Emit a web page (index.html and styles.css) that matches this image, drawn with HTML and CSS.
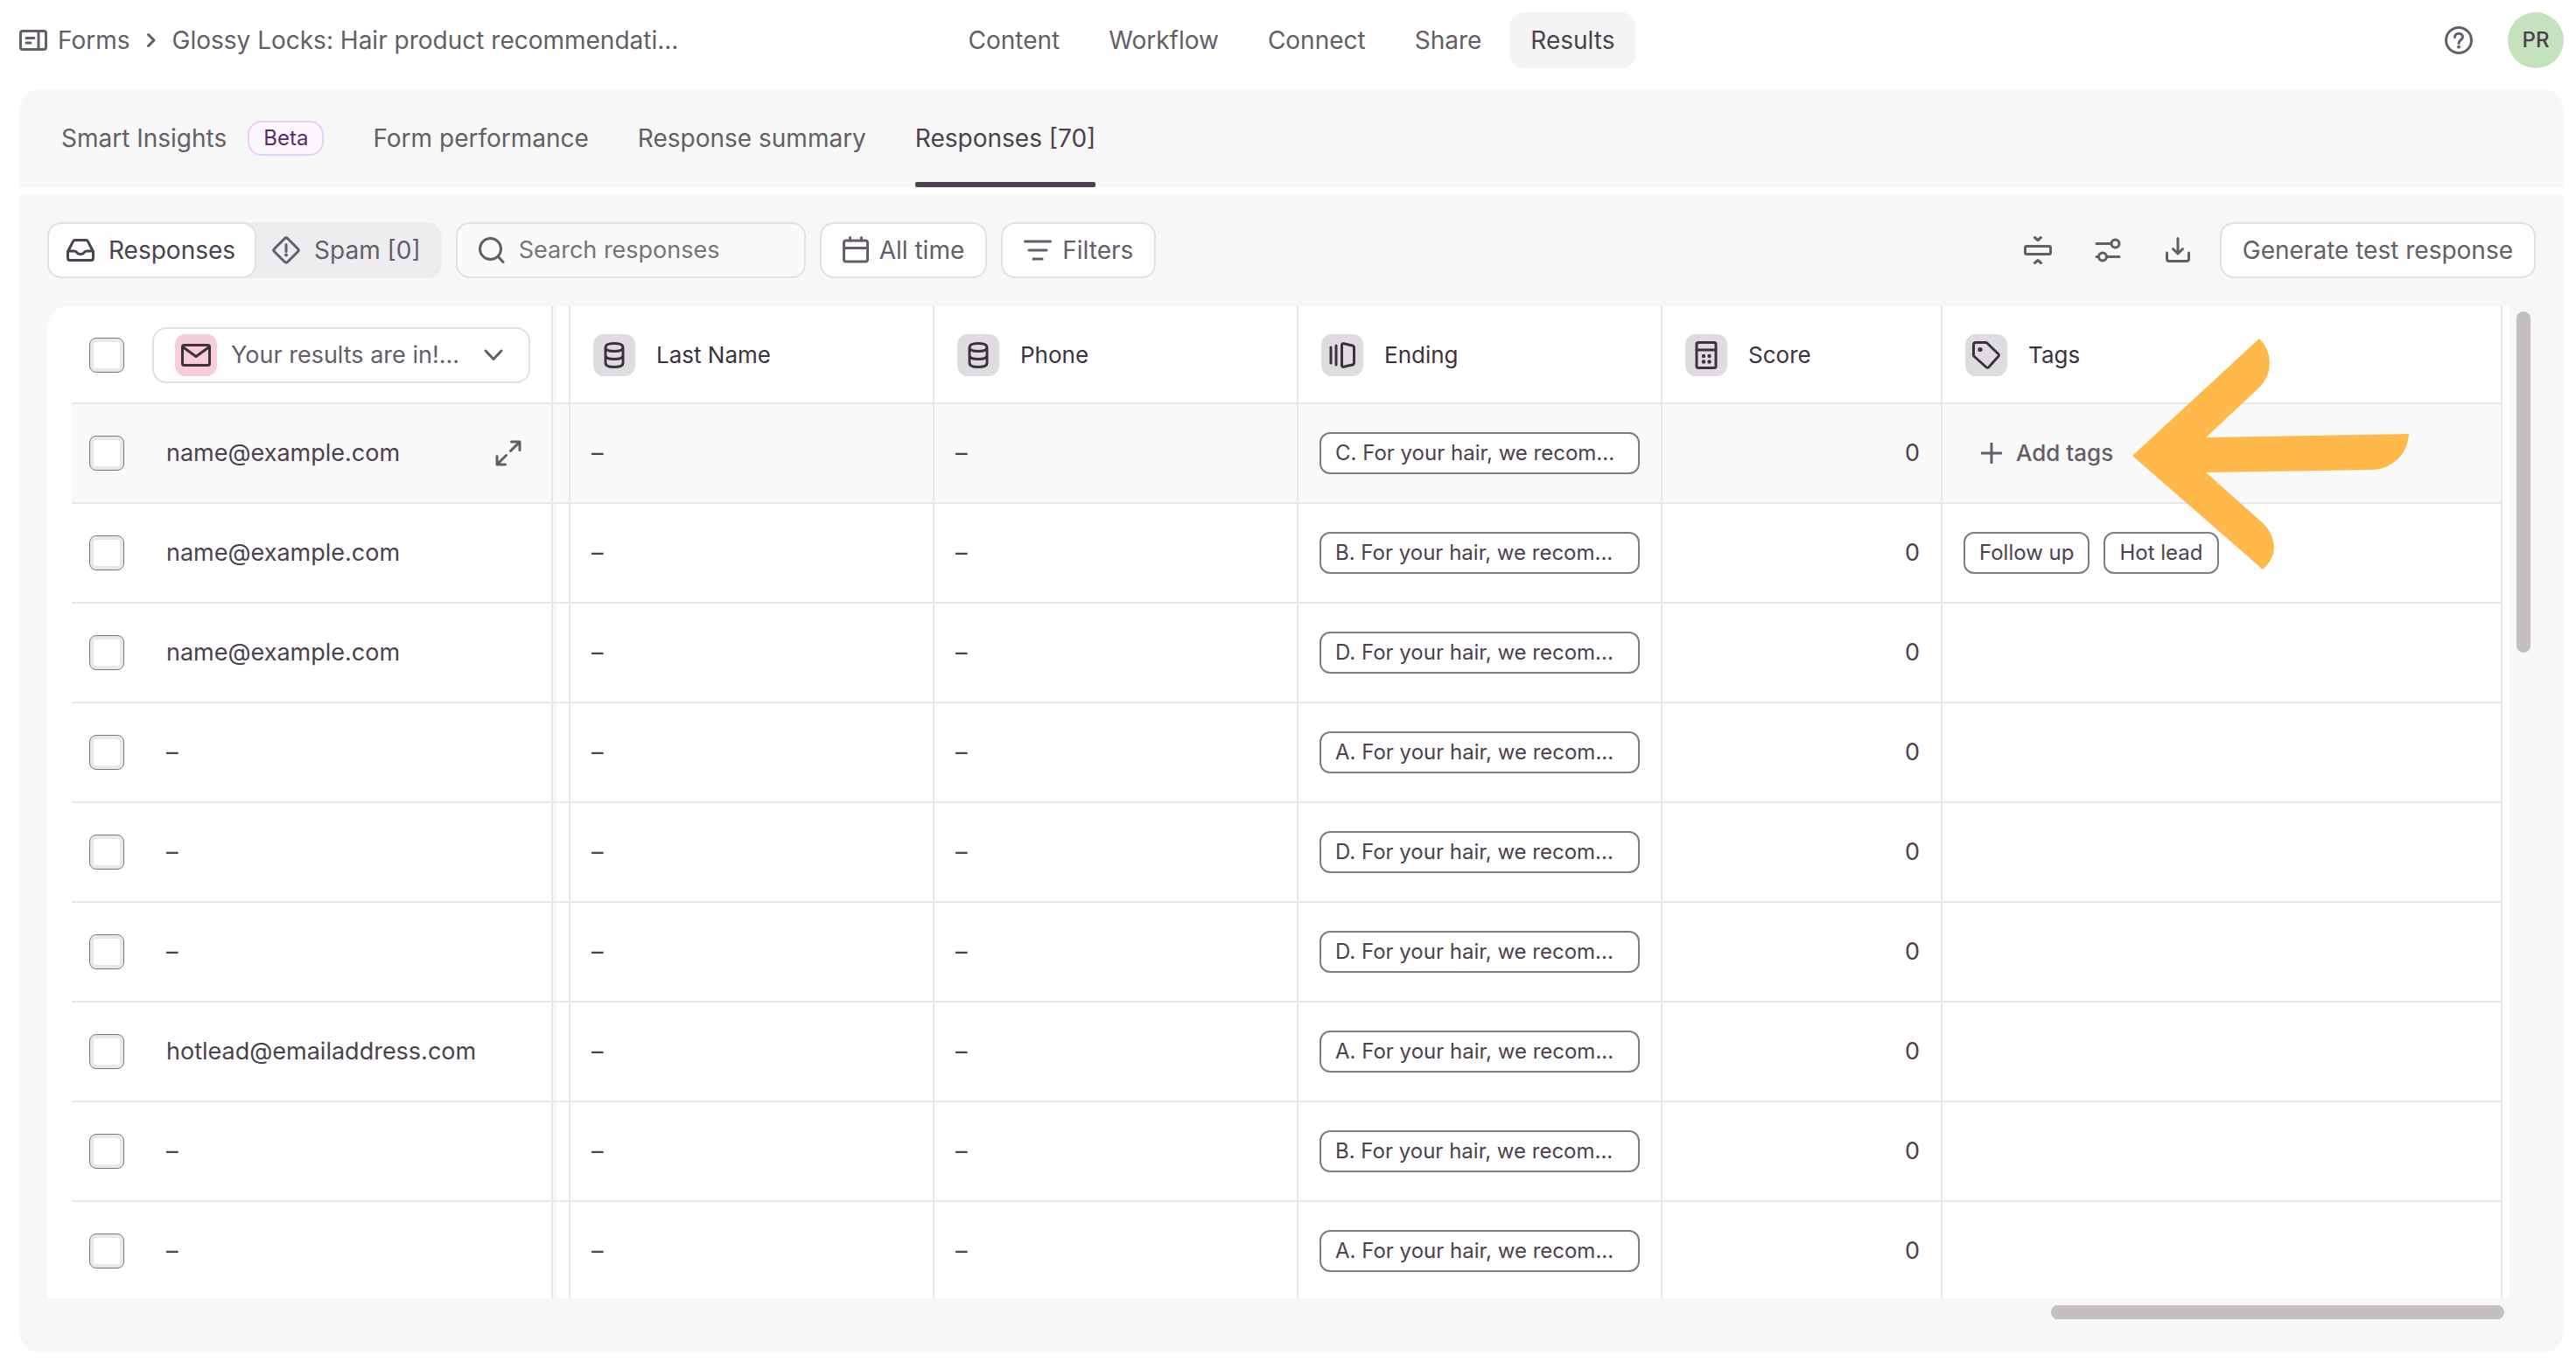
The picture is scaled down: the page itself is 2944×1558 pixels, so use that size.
FILE: index.html
```html
<!DOCTYPE html>
<html lang="en">
<head>
<meta charset="utf-8">
<meta name="viewport" content="width=device-width, initial-scale=1">
<title>Glossy Locks: Hair product recommendation – Results</title>
<link rel="stylesheet" href="styles.css">
</head>
<body>
<svg class="sprite" aria-hidden="true">
  <symbol id="i-db" viewBox="0 0 24 32"><path d="M2 7c0-2.800 4-4.500 10-4.500S22 4.200 22 7s-4 4.500-10 4.500S2 9.800 2 7zM2 7v18c0 2.800 4 4.500 10 4.500s10-1.700 10-4.500V7M2 16c0 2.800 4 4.500 10 4.500s10-1.700 10-4.500"/></symbol>
  <symbol id="i-down" viewBox="0 0 24 16"><path d="M3 3l9 9.500L21 3"/></symbol>
</svg>

<header class="topbar">
  <nav class="crumbs" aria-label="Breadcrumb">
    <a class="crumb" href="#">
      <svg class="icon" width="32" height="24" viewBox="0 0 32 24" aria-hidden="true"><rect x="1.500" y="1.500" width="29" height="21" rx="2.500"/><path d="M22 2v20M8 9.500h9M8 15h5"/></svg>
      Forms
    </a>
    <svg class="icon" width="12" height="18" viewBox="0 0 12 18" aria-hidden="true"><path d="M2.500 2.500L9 9l-6.500 6.500"/></svg>
    <a class="crumb" href="#">Glossy Locks: Hair product recommendati...</a>
  </nav>
  <nav class="mainnav" aria-label="Form">
    <a class="navlink" href="#">Content</a>
    <a class="navlink" href="#">Workflow</a>
    <a class="navlink" href="#">Connect</a>
    <a class="navlink" href="#">Share</a>
    <a class="navlink navlink-on" href="#" aria-current="page">Results</a>
  </nav>
  <div class="account">
    <button class="plain" type="button" aria-label="Help">
      <svg class="icon" width="32" height="32" viewBox="0 0 32 32" aria-hidden="true"><circle cx="16" cy="16" r="14.500"/><path d="M11.500 12.500c0-2.600 2-4.300 4.500-4.300s4.500 1.700 4.500 4.100c0 3.200-4.500 3.600-4.500 7.200"/><circle class="dot" cx="16" cy="23.700" r="1.900"/></svg>
    </button>
    <button class="avatar" type="button">PR</button>
  </div>
</header>

<main class="main">
  <nav class="tabs" aria-label="Results">
    <a class="tab" href="#">Smart Insights <span class="beta">Beta</span></a>
    <a class="tab" href="#">Form performance</a>
    <a class="tab" href="#">Response summary</a>
    <a class="tab tab-on" href="#" aria-current="page">Responses [70]</a>
  </nav>

  <section class="panel">
    <div class="toolbar">
      <div class="segment">
        <button class="seg seg-on" type="button">
          <svg class="icon" width="32" height="32" viewBox="0 0 32 32" aria-hidden="true"><path d="M1.500 17.500L7.500 6q.700-1.500 2.500-1.500h12q1.800 0 2.500 1.500l6 11.500V25q0 2.500-2.500 2.500H4Q1.500 27.500 1.500 25zM1.500 17H9q2 0 3 1.800 1.200 1.700 4 1.700t4-1.700Q21 17 23 17h7.500"/></svg>
          Responses
        </button>
        <button class="seg" type="button">
          <svg class="icon" width="32" height="32" viewBox="0 0 32 32" aria-hidden="true"><path d="M14.200 2.700q1.800-1.800 3.600 0l11.500 11.500q1.800 1.800 0 3.600L17.800 29.300q-1.800 1.800-3.600 0L2.700 17.800q-1.800-1.800 0-3.600zM16 9.500v8"/><circle class="dot" cx="16" cy="21.500" r="1.900"/></svg>
          Spam [0]
        </button>
      </div>
      <label class="search">
        <svg class="icon" width="30" height="30" viewBox="0 0 30 30" aria-hidden="true"><circle cx="13.500" cy="13.500" r="12"/><path d="M22 22l6 6.500"/></svg>
        <input class="search-box" type="text" placeholder="Search responses" aria-label="Search responses">
      </label>
      <button class="btn" type="button">
        <svg class="icon" width="30" height="32" viewBox="0 0 30 32" aria-hidden="true"><rect x="1.500" y="5" width="27" height="24" rx="2.500"/><path d="M2 13.500h26M8.500 1.500V5M21.500 1.500V5"/></svg>
        All time
      </button>
      <button class="btn" type="button">
        <svg class="icon" width="32" height="24" viewBox="0 0 32 24" aria-hidden="true"><path d="M1.500 2h29M6 12h20M11 22h10"/></svg>
        Filters
      </button>
      <div class="tools">
        <button class="plain" type="button" aria-label="Row height">
          <svg class="icon" width="32" height="32" viewBox="0 0 32 32" aria-hidden="true"><rect x="1.500" y="11.500" width="29" height="9" rx="1.500"/><path d="M12.500 1.500l3.500 3 3.500-3M12.500 30.500l3.500-3 3.500 3"/></svg>
        </button>
        <button class="plain" type="button" aria-label="Columns">
          <svg class="icon" width="32" height="32" viewBox="0 0 32 32" aria-hidden="true"><circle cx="24.500" cy="8.500" r="4.500"/><path d="M3 8.500h17M3 23.500h2.500M14.500 23.500H29"/><circle cx="10" cy="23.500" r="4.500"/></svg>
        </button>
        <button class="plain" type="button" aria-label="Download">
          <svg class="icon" width="32" height="32" viewBox="0 0 32 32" aria-hidden="true"><path d="M16 2.500v17M10.500 14.500l5.500 5.500 5.500-5.500M3.500 19v7q0 2.500 2.500 2.500h20q2.500 0 2.500-2.500v-7"/></svg>
        </button>
        <button class="btn btn-wide" type="button">Generate test response</button>
      </div>
    </div>

    <div class="board">
      <div class="sheet">
        <table class="grid">
          <colgroup>
            <col class="c-check"><col class="c-name"><col class="c-gap"><col class="c-mid"><col class="c-mid"><col class="c-mid"><col class="c-score"><col>
          </colgroup>
          <thead>
            <tr>
              <th class="check"><input class="box" type="checkbox" aria-label="Select all responses"></th>
              <th class="name">
                <div class="picker">
                  <span class="badge badge-pink"><svg class="icon" width="34" height="26" viewBox="0 0 34 26" aria-hidden="true"><rect x="1.500" y="1.500" width="31" height="23" rx="2"/><path d="M2.500 4L17 14.500 31.500 4"/></svg></span>
                  <select class="picker-select" aria-label="Question shown"><option>Your results are in!...</option></select>
                  <svg class="icon picker-arrow" width="24" height="16" aria-hidden="true"><use href="#i-down"/></svg>
                </div>
              </th>
              <td class="gap"></td>
              <th><div class="head"><span class="badge"><svg class="icon" width="26" height="32" aria-hidden="true"><use href="#i-db"/></svg></span>Last Name</div></th>
              <th><div class="head"><span class="badge"><svg class="icon" width="26" height="32" aria-hidden="true"><use href="#i-db"/></svg></span>Phone</div></th>
              <th><div class="head"><span class="badge"><svg class="icon" width="30" height="30" viewBox="0 0 30 30" aria-hidden="true"><path d="M2 6v18M8 4v22M14.500 3.500q0-2.200 2.200-1.800l9.800 2.300q2 .500 2 2.500v17q0 2-2 2.500l-9.800 2.300q-2.200.400-2.200-1.800z"/></svg></span>Ending</div></th>
              <th><div class="head"><span class="badge"><svg class="icon" width="26" height="32" viewBox="0 0 26 32" aria-hidden="true"><rect x="2" y="1.500" width="22" height="29" rx="2"/><path d="M2 10h22"/><g class="dot"><circle cx="10" cy="17" r="2.200"/><circle cx="16.500" cy="17" r="2.200"/><circle cx="10" cy="23.500" r="2.200"/><circle cx="16.500" cy="23.500" r="2.200"/></g></svg></span>Score</div></th>
              <th><div class="head"><span class="badge"><svg class="icon" width="32" height="32" viewBox="0 0 32 32" aria-hidden="true"><path d="M1.500 4q0-2.500 2.500-2.500h11q1.200 0 2 .800l12.700 12.200q1.600 1.500 0 3L19 29.500q-1.600 1.600-3.200 0L2.300 17.500q-.800-.800-.800-2z"/><circle class="dot" cx="9" cy="9.500" r="2.600"/></svg></span>Tags</div></th>
            </tr>
          </thead>
          <tbody>
            <tr class="hover">
              <td class="check"><input class="box" type="checkbox" aria-label="Select response 1"></td>
              <td class="name"><div class="who">name@example.com<button class="plain" type="button" aria-label="Expand"><svg class="icon" width="30" height="30" viewBox="0 0 30 30" aria-hidden="true"><path d="M18.500 2H28v9.500M27.500 2.500L17.500 12.500M11.500 28H2v-9.500M2.500 27.500l10-10"/></svg></button></div></td>
              <td class="gap"></td><td>–</td><td>–</td><td><span class="chip">C. For your hair, we recom...</span></td><td class="num">0</td>
              <td><button class="add" type="button"><svg class="icon" width="24" height="24" viewBox="0 0 24 24" aria-hidden="true"><path d="M12 1v22M1 12h22"/></svg>Add tags</button></td>
            </tr>
            <tr>
              <td class="check"><input class="box" type="checkbox" aria-label="Select response 2"></td>
              <td class="name">name@example.com</td>
              <td class="gap"></td><td>–</td><td>–</td><td><span class="chip">B. For your hair, we recom...</span></td><td class="num">0</td>
              <td><div class="tags"><span class="chip">Follow up</span><span class="chip">Hot lead</span></div></td>
            </tr>
            <tr>
              <td class="check"><input class="box" type="checkbox" aria-label="Select response 3"></td>
              <td class="name">name@example.com</td>
              <td class="gap"></td><td>–</td><td>–</td><td><span class="chip">D. For your hair, we recom...</span></td><td class="num">0</td><td></td>
            </tr>
            <tr>
              <td class="check"><input class="box" type="checkbox" aria-label="Select response 4"></td>
              <td class="name">–</td>
              <td class="gap"></td><td>–</td><td>–</td><td><span class="chip">A. For your hair, we recom...</span></td><td class="num">0</td><td></td>
            </tr>
            <tr>
              <td class="check"><input class="box" type="checkbox" aria-label="Select response 5"></td>
              <td class="name">–</td>
              <td class="gap"></td><td>–</td><td>–</td><td><span class="chip">D. For your hair, we recom...</span></td><td class="num">0</td><td></td>
            </tr>
            <tr>
              <td class="check"><input class="box" type="checkbox" aria-label="Select response 6"></td>
              <td class="name">–</td>
              <td class="gap"></td><td>–</td><td>–</td><td><span class="chip">D. For your hair, we recom...</span></td><td class="num">0</td><td></td>
            </tr>
            <tr>
              <td class="check"><input class="box" type="checkbox" aria-label="Select response 7"></td>
              <td class="name">hotlead@emailaddress.com</td>
              <td class="gap"></td><td>–</td><td>–</td><td><span class="chip">A. For your hair, we recom...</span></td><td class="num">0</td><td></td>
            </tr>
            <tr>
              <td class="check"><input class="box" type="checkbox" aria-label="Select response 8"></td>
              <td class="name">–</td>
              <td class="gap"></td><td>–</td><td>–</td><td><span class="chip">B. For your hair, we recom...</span></td><td class="num">0</td><td></td>
            </tr>
            <tr>
              <td class="check"><input class="box" type="checkbox" aria-label="Select response 9"></td>
              <td class="name">–</td>
              <td class="gap"></td><td>–</td><td>–</td><td><span class="chip">A. For your hair, we recom...</span></td><td class="num">0</td><td></td>
            </tr>
          </tbody>
        </table>
      </div>
      <div class="vbar"></div>
      <div class="hbar"></div>
      <svg class="pointer" width="320" height="268" viewBox="0 0 320 268" aria-hidden="true"><path d="M0 136L145 2Q157 14 157 30Q157 46 145 58L84 115L316 111Q315 129 303 140Q290 152 275 152L84 155L147 211Q161 223 162 241Q162 254 149 266Z"/></svg>
    </div>
  </section>
</main>
</body>
</html>
```
FILE: styles.css
```css
:root {
  --ink: #4c414e;
  --ink-strong: #3c323e;
  --ink-soft: #655d67;
  --line: #e8e8e8;
  --surface: #f7f7f7;
  --control: #fdfdfd;
  --control-line: #e1e1e1;
}

* { box-sizing: border-box; }

body {
  margin: 0;
  height: 100vh;
  display: flex;
  flex-direction: column;
  padding: 14px 14px 12px 22px;
  background: #fff;
  color: var(--ink);
  font: 28px/40px Inter, "Liberation Sans", sans-serif;
}

a { color: inherit; text-decoration: none; }
button, input, select { font: inherit; color: inherit; margin: 0; }
button { cursor: pointer; }

.sprite { display: none; }

.icon {
  flex: none;
  fill: none;
  stroke: currentColor;
  stroke-width: 3;
  stroke-linecap: round;
  stroke-linejoin: round;
}

.dot { fill: currentColor; stroke: none; }

.plain {
  display: flex;
  padding: 0;
  border: 0;
  background: none;
  color: var(--ink-soft);
}

/* Top bar */

.topbar {
  display: grid;
  grid-template-columns: 1fr auto 1fr;
  align-items: center;
  margin-bottom: 24px;
  color: var(--ink-soft);
}

.crumbs { display: flex; align-items: center; gap: 18px; }
.crumb { display: flex; align-items: center; gap: 12px; white-space: nowrap; }

.mainnav { display: flex; gap: 8px; }
.navlink { padding: 12px 24px; border-radius: 16px; }
.navlink-on { background: #f4f4f4; color: var(--ink); }

.account { display: flex; align-items: center; justify-content: flex-end; gap: 40px; }

.avatar {
  width: 64px;
  height: 64px;
  padding: 0;
  border: 0;
  border-radius: 50%;
  background: #c4e2bb;
  color: var(--ink);
  font-size: 24px;
  font-weight: 500;
}

/* Panels */

.main { flex: 1; min-height: 0; display: flex; flex-direction: column; gap: 8px; }

.tabs {
  display: flex;
  gap: 56px;
  height: 112px;
  padding: 0 48px;
  border-radius: 24px 24px 0 0;
  background: var(--surface);
  color: var(--ink-soft);
}

.tab {
  display: flex;
  align-items: center;
  gap: 24px;
  border: solid transparent;
  border-width: 6px 0;
  white-space: nowrap;
}

.tab-on { position: relative; color: var(--ink); }

.tab-on::after {
  content: "";
  position: absolute;
  inset: auto 0 -6px;
  height: 6px;
  border-radius: 2px;
  background: var(--ink);
}

.beta {
  padding: 0 16px;
  border: 2px solid #e9cdfb;
  border-radius: 16px;
  background: #fdf8ff;
  color: #5b2a6e;
  font-size: 24px;
  line-height: 36px;
}

.panel {
  flex: 1;
  min-height: 0;
  display: flex;
  flex-direction: column;
  gap: 32px;
  padding: 32px 32px 38px;
  border-radius: 0 0 24px 24px;
  background: var(--surface);
}

/* Toolbar */

.toolbar { display: flex; gap: 16px; color: var(--ink-soft); }

.segment {
  display: flex;
  padding: 2px;
  border-radius: 16px;
  background: #ededef;
}

.seg {
  display: flex;
  align-items: center;
  gap: 16px;
  height: 60px;
  padding: 0 22px 0 20px;
  border: 0;
  border-radius: 14px;
  background: none;
}

.seg-on { background: var(--control); color: var(--ink); box-shadow: 0 0 0 2px var(--control-line); }

.search, .btn {
  display: flex;
  align-items: center;
  height: 64px;
  border: 2px solid var(--control-line);
  border-radius: 16px;
  background: var(--control);
}

.search { gap: 16px; width: 400px; padding: 0 24px; background: #fafafa; }

.search-box {
  flex: 1;
  min-width: 0;
  padding: 0;
  border: 0;
  outline: 0;
  background: none;
  font-size: 27px;
}

.search-box::placeholder { color: #757575; opacity: 1; }

.btn { gap: 12px; padding: 0 24px; white-space: nowrap; }
.tools { display: flex; align-items: center; gap: 48px; margin-left: auto; }
.btn-wide { margin-left: -16px; }

/* Response table */

.board {
  position: relative;
  flex: 1;
  min-height: 0;
  display: grid;
  grid-template: minmax(0, 1fr) 16px / minmax(0, 1fr) 16px;
  gap: 8px;
  padding-right: 6px;
}

.sheet {
  overflow: hidden;
  padding: 0 8px 0 28px;
  border-radius: 24px 0 0 0;
  background: #fff;
}

.grid {
  width: 100%;
  table-layout: fixed;
  border-collapse: separate;
  border-spacing: 0;
  font-size: 27px;
}

.c-check { width: 92px; }
.c-name { width: 458px; }
.c-gap { width: 20px; }
.c-mid { width: 416px; }
.c-score { width: 320px; }

.grid th, .grid td {
  height: 114px;
  padding: 0 24px;
  border: solid var(--line);
  border-width: 0 2px 2px 0;
  text-align: left;
  font-weight: 400;
  white-space: nowrap;
}

.grid thead th, .grid thead td { height: 112px; padding: 2px 24px 0 26px; }
.grid .check, .grid thead .check { padding-left: 20px; padding-right: 20px; border-right-width: 0; }
.grid .name { padding-left: 16px; padding-right: 34px; }
.grid thead .name { padding-left: 0; padding-right: 24px; }
.grid .gap, .grid thead .gap { padding: 0; background: linear-gradient(90deg, var(--surface) 4px, transparent 4px); }
.grid .num { text-align: right; }
.hover { background: #f9f9f9; }

.box {
  display: block;
  width: 40px;
  height: 40px;
  appearance: none;
  border: 1px solid #777;
  border-radius: 8px;
  background: #fff;
  box-shadow: inset 0 0 0 4px #e8e8e8;
}

.picker {
  display: flex;
  align-items: center;
  gap: 16px;
  height: 64px;
  padding: 0 28px 0 24px;
  border: 2px solid var(--control-line);
  border-radius: 16px;
  color: var(--ink-soft);
}

.picker-select {
  flex: 1;
  min-width: 0;
  padding: 0;
  border: 0;
  appearance: none;
  background: none;
}

.head {
  display: flex;
  align-items: center;
  gap: 24px;
  color: var(--ink-strong);
  font-size: 26px;
}

.badge {
  flex: none;
  display: grid;
  place-items: center;
  width: 48px;
  height: 48px;
  border-radius: 12px;
  background: #dedcdf;
  color: var(--ink-strong);
}

.badge-pink { background: #f8ccda; }

.who { display: flex; align-items: center; justify-content: space-between; }

.chip {
  display: block;
  padding: 0 16px;
  border: 2px solid #827a84;
  border-radius: 12px;
  background: #fff;
  font-size: 24px;
  line-height: 44px;
}

.tags { display: flex; gap: 16px; }

.add {
  display: flex;
  align-items: center;
  gap: 16px;
  padding: 0 20px;
  border: 0;
  background: none;
  color: var(--ink-soft);
  font-size: 26px;
  font-weight: 500;
}

/* Scroll thumbs */

.vbar, .hbar { border-radius: 8px; background: #c4bfc3; }
.vbar { height: 390px; margin-top: 6px; }
.hbar { width: 518px; margin-right: 6px; justify-self: end; }

/* Callout arrow lying over the table */

.pointer {
  position: absolute;
  top: 35px;
  right: 141px;
  fill: #ffb94a;
}
```
